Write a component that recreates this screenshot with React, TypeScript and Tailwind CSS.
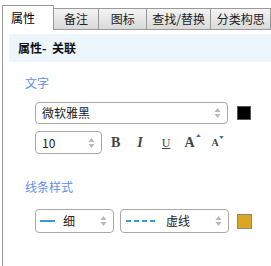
import React from 'react';

const font = { fontFamily: '"Noto Sans CJK SC", "Liberation Sans", sans-serif' };

function Spinner() {
  return (
    <svg width="7" height="12" viewBox="0 0 7 12" className="shrink-0">
      <path d="M3.5 1 L6.5 5 L0.5 5 Z" fill="#b8b8b8" />
      <path d="M3.5 11 L6.5 7 L0.5 7 Z" fill="#b8b8b8" />
    </svg>
  );
}

function Tab({ label, active, w }: { label: string; active?: boolean; w: string }) {
  if (active) {
    return (
      <div className={`${w} h-[25px] bg-white border border-b-0 border-[#9a9a9a] flex items-center pl-[8px] text-[12px] text-black relative z-10`}>
        {label}
      </div>
    );
  }
  return (
    <div className={`${w} h-[22px] border border-l-0 border-[#9a9a9a] bg-gradient-to-b from-[#f4f4f4] to-[#d9d9d9] flex items-center justify-center text-[12px] text-[#222]`}>
      {label}
    </div>
  );
}

export default function App() {
  return (
    <div className="w-[271px] h-[266px] bg-white overflow-hidden" style={font}>
      {/* Tabs */}
      <div className="flex items-end h-[30px] pl-[2px]">
        <Tab label="属性" active w="w-[52px]" />
        <Tab label="备注" w="w-[46px]" />
        <Tab label="图标" w="w-[48px]" />
        <Tab label="查找/替换" w="w-[65px]" />
        <Tab label="分类构思" w="w-[60px]" />
      </div>

      {/* Panel */}
      <div className="ml-[2px] border-l border-[#9a9a9a] h-[236px] pt-[4px]">
        <div className="ml-[6px] h-[28px] bg-[#eef6fd] flex items-center pl-[9px] text-[12px] font-bold text-[#111]">
          属性-&nbsp;&nbsp;关联
        </div>

        {/* 文字 */}
        <div className="mt-[13px] ml-[22px] h-[16px] leading-[16px] text-[12px] text-[#5b8fea]">文字</div>

        <div className="mt-[11px] ml-[32px] flex items-center">
          <div className="w-[193px] h-[22px] border border-[#a8a8a8] rounded-[4px] flex items-center justify-between pl-[6px] pr-[6px] text-[12px] text-[#222]">
            <span>微软雅黑</span>
            <Spinner />
          </div>
          <div className="ml-[9px] w-[14px] h-[14px] bg-black border border-[#555]" />
        </div>

        <div className="mt-[7px] ml-[32px] flex items-center">
          <div className="w-[67px] h-[23px] border border-[#a8a8a8] rounded-[4px] flex items-center justify-between pl-[6px] pr-[6px] text-[12px] text-[#222]">
            <span>10</span>
            <Spinner />
          </div>
          <div className="flex items-center text-[#444]" style={{ fontFamily: '"Liberation Serif", serif' }}>
            <span className="ml-[9px] font-bold text-[14px]">B</span>
            <span className="ml-[17px] font-bold italic text-[14px]">I</span>
            <span className="ml-[19px] underline text-[12px]">U</span>
            <span className="ml-[14px] font-bold relative text-[14px]">
              A
              <svg width="5" height="3" viewBox="0 0 6 4" className="absolute -right-[6px] top-[2px]">
                <path d="M3 0 L6 4 L0 4 Z" fill="#3d6eb8" />
              </svg>
            </span>
            <span className="ml-[17px] font-bold relative text-[10px]">
              A
              <svg width="5" height="3" viewBox="0 0 6 4" className="absolute -right-[5px] top-[1px]">
                <path d="M0 0 L6 0 L3 4 Z" fill="#3d6eb8" />
              </svg>
            </span>
          </div>
        </div>

        {/* 线条样式 */}
        <div className="mt-[25px] ml-[22px] h-[16px] leading-[16px] text-[12px] text-[#5b8fea]">线条样式</div>

        <div className="mt-[14px] ml-[32px] flex items-center">
          <div className="w-[79px] h-[24px] border border-[#a8a8a8] rounded-[4px] flex items-center justify-between pl-[4px] pr-[6px] text-[12px] text-[#222]">
            <span className="flex items-center">
              <span className="w-[15px] h-[1.5px] bg-[#3a9ad9]" />
              <span className="ml-[8px]">细</span>
            </span>
            <Spinner />
          </div>
          <div className="ml-[6px] w-[109px] h-[24px] border border-[#a8a8a8] rounded-[4px] flex items-center justify-between pl-[5px] pr-[6px] text-[12px] text-[#222]">
            <span className="flex items-center">
              <svg width="31" height="2" viewBox="0 0 31 2">
                <line x1="0" y1="1" x2="31" y2="1" stroke="#3a9ad9" strokeWidth="2" strokeDasharray="5 3" />
              </svg>
              <span className="ml-[9px]">虚线</span>
            </span>
            <Spinner />
          </div>
          <div className="ml-[8px] w-[15px] h-[15px] bg-[#daa520] border border-[#888]" />
        </div>
      </div>
    </div>
  );
}
